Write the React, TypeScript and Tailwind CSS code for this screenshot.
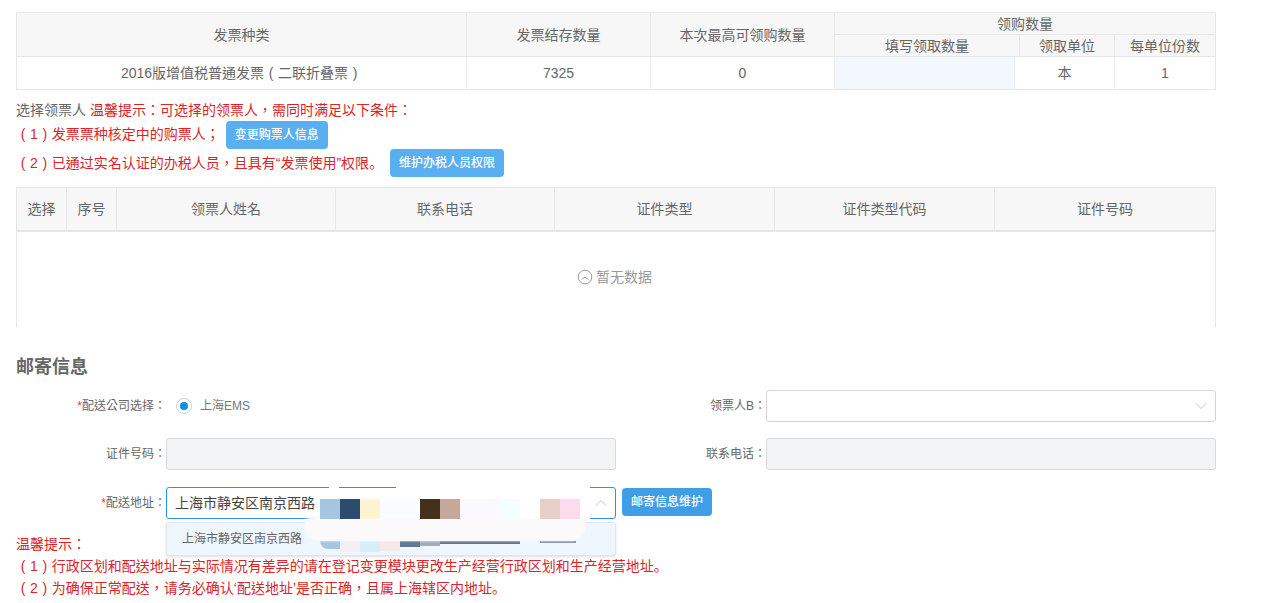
import React from 'react';
import { ChevronDown, ChevronUp } from 'lucide-react';

const pickerColumns = ['选择', '序号', '领票人姓名', '联系电话', '证件类型', '证件类型代码', '证件号码'];

const topSwatches = [
  { id: 1, cls: 'w-5 bg-[#a5c5e2]' },
  { id: 2, cls: 'w-5 bg-[#2c4b6e]' },
  { id: 3, cls: 'w-5 bg-[#fff3d0]' },
  { id: 4, cls: 'w-10 bg-[#f9fdff]' },
  { id: 6, cls: 'w-5 bg-[#45301c]' },
  { id: 7, cls: 'w-5 bg-[#c5a89a]' },
  { id: 8, cls: 'w-10 bg-[#faf9fd]' },
  { id: 9, cls: 'w-5 bg-[#f4fdff]' },
  { id: 10, cls: 'w-5 bg-white' },
  { id: 11, cls: 'w-5 bg-[#e8cfc8]' },
  { id: 12, cls: 'w-5 bg-[#fcdcec]' },
];

const bottomSwatches = [
  { id: 1, cls: 'h-[8px] w-5 rounded-bl-xl bg-[#a5c5e2]' },
  { id: 2, cls: 'h-[11px] w-5 bg-[#f2eef3]' },
  { id: 3, cls: 'h-[11px] w-5 bg-[#d5effa]' },
  { id: 4, cls: 'h-[10px] w-5 bg-[#f7e8e8]' },
  { id: 5, cls: 'h-[6px] w-5 bg-[#5f7a92]' },
  { id: 6, cls: 'h-[5px] w-5 bg-[#a5aeb5]' },
];

const FormLabel: React.FC<{ text: string; required?: boolean; className: string }> = ({ text, required, className }) => (
  <label className={`shrink-0 text-right text-xs text-[#666] ${className}`}>
    {required && <span className="text-[#e23b3b]">*</span>}
    {text}：
  </label>
);

// full width bracket with the glyph in the middle of its box
const Paren: React.FC<{ char: string }> = ({ char }) => <span className="inline-block w-[14px] text-center">{char}</span>;

const Stop: React.FC = () => <span className="font-['Noto_Sans_CJK_SC']">。</span>;

const App: React.FC = () => {
  return (
    <div className="h-[603px] w-[1261px] overflow-hidden bg-white pl-4 pt-3 font-['Liberation_Sans','Noto_Sans_CJK_TC',sans-serif] text-sm text-[#666]">
      <div className="w-[1200px] border border-[#e6e6e6] text-center">
        <div className="flex h-[44px] border-b border-[#e6e6e6] bg-[#f7f7f7]">
          <div className="flex w-[450px] items-center justify-center border-r border-[#e6e6e6]">发票种类</div>
          <div className="flex w-[184px] items-center justify-center border-r border-[#e6e6e6]">发票结存数量</div>
          <div className="flex w-[184px] items-center justify-center border-r border-[#e6e6e6]">本次最高可领购数量</div>
          <div className="flex flex-1 flex-col">
            <div className="flex h-[22px] items-center justify-center border-b border-[#e6e6e6]">领购数量</div>
            <div className="flex flex-1">
              <div className="flex w-[185px] items-center justify-center border-r border-[#e6e6e6]">填写领取数量</div>
              <div className="flex w-[95px] items-center justify-center border-r border-[#e6e6e6]">领取单位</div>
              <div className="flex flex-1 items-center justify-center">每单位份数</div>
            </div>
          </div>
        </div>
        <div className="flex h-[32px]">
          <div className="w-[450px] border-r border-[#eeeeee] leading-8">
            2016版增值税普通发票<Paren char="(" />二联折叠票<Paren char=")" />
          </div>
          <div className="flex w-[184px] items-center justify-center border-r border-[#eeeeee]">7325</div>
          <div className="flex w-[184px] items-center justify-center border-r border-[#eeeeee]">0</div>
          <div className="w-[180px] border-r border-[#eeeeee] bg-[#f2f8fe]" />
          <div className="flex w-[100px] items-center justify-center border-r border-[#eeeeee]">本</div>
          <div className="flex flex-1 items-center justify-center">1</div>
        </div>
      </div>

      <div className="mt-[10px] leading-5">
        选择领票人 <span className="text-[#d9252a]">温馨提示：可选择的领票人，需同时满足以下条件：</span>
      </div>
      <div className="mt-[1px] flex h-7 items-center text-[#d9252a]">
        <span className="mb-[2px]">
          <Paren char="(" />1<Paren char=")" />发票票种核定中的购票人；
        </span>
        <button className="ml-[6px] h-7 w-[102px] rounded-sm bg-[#5aaff0] text-xs font-medium text-white">变更购票人信息</button>
      </div>
      <div className="flex h-7 items-center text-[#d9252a]">
        <span className="mb-[2px] w-[368px]">
          <Paren char="(" />2<Paren char=")" />已通过实名认证的办税人员，且具有“发票使用”权限<Stop />
        </span>
        <button className="ml-[6px] h-7 w-[114px] rounded-sm bg-[#5aaff0] text-xs font-medium text-white">维护办税人员权限</button>
      </div>

      <div className="mt-[10px] w-[1200px]">
        <div className="flex h-[45px] border border-b-2 border-[#e6e6e6] bg-[#f7f7f7] text-center">
          {pickerColumns.map((col, i) => (
            <div
              key={col}
              className={`flex items-center justify-center border-[#e8e8e8] ${i < 6 ? 'border-r' : ''} ${
                i === 0 ? 'w-[50px]' : i === 1 ? 'w-[50px]' : i === 2 ? 'w-[219px]' : i === 3 ? 'w-[219px]' : i === 4 ? 'w-[220px]' : i === 5 ? 'w-[220px]' : 'flex-1'
              }`}
            >
              {col}
            </div>
          ))}
        </div>
        <div className="flex h-[95px] items-center justify-center gap-[3px] border-x border-[#e6e6e6] pr-[3px] pb-[6px] text-[#999]">
          <svg viewBox="0 0 16 16" className="h-4 w-4" fill="none" stroke="#999" strokeWidth="1">
            <circle cx="8" cy="8" r="6.8" />
            <path d="M4.8 10.6 Q8 6.2 11.2 10.6" />
          </svg>
          <span>暂无数据</span>
        </div>
      </div>

      <h2 className="mt-[28px] text-lg leading-6 font-bold text-[#666]">邮寄信息</h2>

      <div className="mt-[11px] flex h-8 w-[1200px]">
        <div className="flex w-[600px] items-center">
          <FormLabel text="配送公司选择" required className="w-[150px]" />
          <span className="ml-[10px] flex h-4 w-4 items-center justify-center rounded-full border border-[#c9d6e2] bg-white">
            <span className="h-2 w-2 rounded-full bg-[#0f8fe0]" />
          </span>
          <span className="ml-2 text-xs text-[#777]">上海EMS</span>
        </div>
        <div className="flex flex-1 items-center">
          <FormLabel text="领票人B" className="w-[150px]" />
          <div className="flex h-8 flex-1 items-center justify-end rounded-[3px] border border-[#d4d4d4] bg-white pr-1">
            <ChevronDown className="h-5 w-5 text-[#bbbbbb]" strokeWidth={1} />
          </div>
        </div>
      </div>

      <div className="mt-4 flex h-8 w-[1200px]">
        <div className="flex w-[600px] items-center">
          <FormLabel text="证件号码" className="w-[150px]" />
          <div className="h-8 w-[450px] rounded-[3px] border border-[#d9d9d9] bg-[#f3f4f6]" />
        </div>
        <div className="flex flex-1 items-center">
          <FormLabel text="联系电话" className="w-[150px]" />
          <div className="h-8 flex-1 rounded-[3px] border border-[#d9d9d9] bg-[#f3f4f6]" />
        </div>
      </div>

      <div className="relative mt-[17px] w-[1200px]">
        <div className="flex h-8 items-center">
          <FormLabel text="配送地址" required className="w-[150px]" />
          <div className="flex h-8 w-[450px] items-center justify-between rounded-[3px] border border-[#2f93d8] bg-white pr-1 pl-2">
            <span className="text-[#444]">上海市静安区南京西路</span>
            <ChevronUp className="h-5 w-5 text-[#bbbbbb]" strokeWidth={1} />
          </div>
          <button className="mb-[2px] ml-[6px] h-7 w-[90px] rounded-sm bg-[#3f9fe6] text-xs font-medium text-white">邮寄信息维护</button>
        </div>

        <div className="absolute top-[35px] left-[150px] z-10 flex h-[34px] w-[450px] items-center rounded-[3px] border border-[#e2e6ea] bg-[#eef7fd] pl-[15px] text-xs text-[#666] shadow-sm">
          上海市静安区南京西路
        </div>

        {/* mosaic and white smear hiding the street number */}
        <div className="absolute top-[54px] left-[304px] z-20 flex items-start">
          {bottomSwatches.map((s) => (
            <div key={s.id} className={s.cls} />
          ))}
          <div className="h-[3px] w-[80px] bg-[#6d757c] blur-[0.5px]" />
          <div className="ml-[20px] h-[2px] w-[36px] bg-[#8b9197] blur-[0.5px]" />
        </div>
        <div className="absolute top-[1px] left-[299px] z-30 h-[33px] w-[275px] bg-white" />
        <div className="absolute -top-[2px] left-[380px] z-30 h-[6px] w-[194px] bg-white" />
        <div className="absolute -top-[2px] left-[313px] z-30 h-[6px] w-[10px] bg-white" />
        <div className="absolute top-[30px] left-[288px] z-30 h-[24px] w-[282px] rounded-b-2xl rounded-tl-lg bg-[#fbf9f9] blur-[1px]" />
        <div className="absolute top-3 left-[304px] z-40 flex h-5">
          {topSwatches.map((s) => (
            <div key={s.id} className={s.cls} />
          ))}
        </div>

        <div className="mt-[15px] text-[#d9252a]">
          <p className="h-[21px] leading-[21px]">温馨提示：</p>
          <p className="h-[22px] leading-[20px]">
            <Paren char="(" />1<Paren char=")" />行政区划和配送地址与实际情况有差异的请在登记变更模块更改生产经营行政区划和生产经营地址<Stop />
          </p>
          <p className="h-[22px] leading-[20px]">
            <Paren char="(" />2<Paren char=")" />为确保正常配送，请务必确认‘配送地址’是否正确，且属上海辖区内地址<Stop />
          </p>
        </div>
      </div>
    </div>
  );
};

export default App;
